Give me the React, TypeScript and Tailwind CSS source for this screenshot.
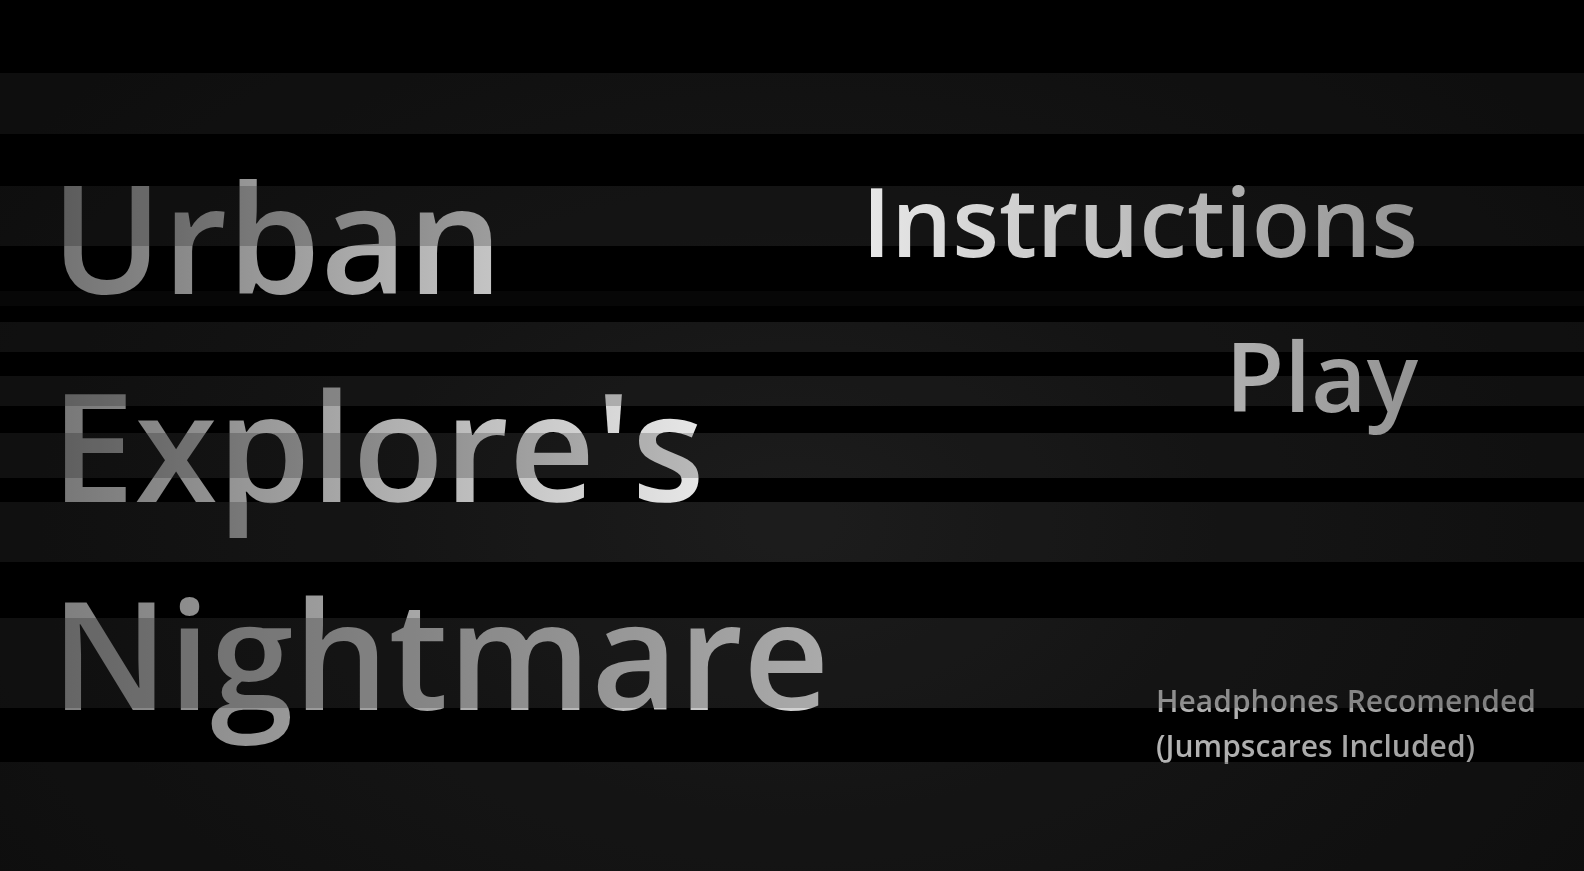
import * as React from 'react';

// scanline bands, top to bottom; "lit" bands let the glow through
const BANDS = [
  { h: 'h-[73px]', bg: 'bg-black', lit: false },
  { h: 'h-[61px]', bg: '', lit: true },
  { h: 'h-[52px]', bg: 'bg-black', lit: false },
  { h: 'h-[60px]', bg: '', lit: true },
  { h: 'h-[45px]', bg: 'bg-black', lit: false },
  { h: 'h-[15px]', bg: 'bg-[#070707]', lit: false },
  { h: 'h-[16px]', bg: 'bg-black', lit: false },
  { h: 'h-[30px]', bg: '', lit: true },
  { h: 'h-[24px]', bg: 'bg-black', lit: false },
  { h: 'h-[30px]', bg: '', lit: true },
  { h: 'h-[27px]', bg: 'bg-black', lit: false },
  { h: 'h-[45px]', bg: '', lit: true },
  { h: 'h-[24px]', bg: 'bg-black', lit: false },
  { h: 'h-[60px]', bg: '', lit: true },
  { h: 'h-[56px]', bg: 'bg-black', lit: false },
  { h: 'h-[90px]', bg: '', lit: true },
  { h: 'h-[54px]', bg: 'bg-black', lit: false },
  { h: 'h-[109px]', bg: '', lit: true },
];

const TITLE = [
  { word: 'Urban', cls: 'from-[#727272] to-[#c6c6c6]' },
  { word: "Explore's", cls: 'from-[#767676] to-[#e8e8e8]' },
  { word: 'Nightmare', cls: 'from-[#7e7e7e] to-[#d6d6d6]' },
];

const MENU = ['Instructions', 'Play'];

export default function App() {
  const [hovered, setHovered] = React.useState<string | null>(null);

  return (
    <div className="relative isolate h-[871px] w-full overflow-hidden bg-[radial-gradient(ellipse_60%_75%_at_50%_60%,#242424_0%,#1a1a1a_45%,#121212_100%)] font-['Open_Sans',sans-serif] select-none">
      {/* dark bands sit behind the title */}
      <div className="absolute inset-0 flex flex-col">
        {BANDS.map((b, i) => (
          <div key={i} className={`shrink-0 ${b.h} ${b.bg}`} />
        ))}
      </div>

      <div className="relative flex h-full">
        <div className="w-[840px] shrink-0 pl-[51px] pt-[132px]">
          {TITLE.map((t) => (
            <div key={t.word} className="text-[150px] font-semibold leading-[208px] whitespace-nowrap">
              <span className={`inline-block bg-linear-to-r bg-clip-text text-transparent ${t.cls}`}>{t.word}</span>
            </div>
          ))}
        </div>

        <div className="flex flex-1 flex-col">
          <div className="relative z-20 mr-[166px] mt-[142px] self-end">
            <div className="bg-linear-to-r from-[#e8e8e8] to-[#939393] bg-clip-text text-right text-transparent">
              {MENU.map((m) => (
                <div
                  key={m}
                  onMouseEnter={() => setHovered(m)}
                  onMouseLeave={() => setHovered(null)}
                  className={`cursor-pointer text-[96px] font-semibold leading-[155px] whitespace-nowrap ${hovered === m ? 'opacity-90' : ''}`}
                >
                  {m}
                </div>
              ))}
            </div>
          </div>

          <div className="ml-[316px] mt-[226px] text-[30px] font-semibold leading-[45px] whitespace-nowrap">
            <span className="inline-block bg-linear-to-r from-[#b4b4b4] to-[#9c9c9c] bg-clip-text text-transparent">
              Headphones Recomended
              <br />
              (Jumpscares Included)
            </span>
          </div>
        </div>
      </div>

      {/* lit bands dim whatever passes under them */}
      <div className="pointer-events-none absolute inset-0 z-10 flex flex-col">
        {BANDS.map((b, i) => (
          <div key={i} className={`shrink-0 ${b.h} ${b.lit ? 'bg-black/20' : ''}`} />
        ))}
      </div>
    </div>
  );
}
